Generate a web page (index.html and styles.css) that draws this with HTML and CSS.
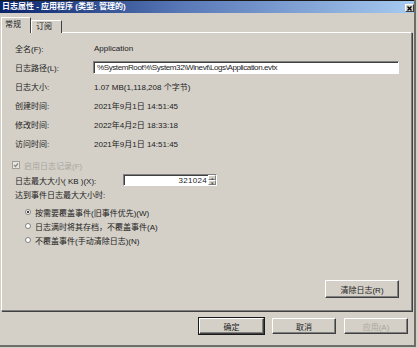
FILE: index.html
```html
<!DOCTYPE html>
<html lang="zh-CN">
<head>
    <meta charset="UTF-8">
    <meta name="viewport" content="width=device-width, initial-scale=1.0">
    <title>日志属性 - 应用程序</title>
    <link rel="stylesheet" href="styles.css">
</head>
<body>
    <div class="window">
        <div class="titlebar">
            <span class="title">日志属性 - 应用程序 (类型: 管理的)</span>
            <span class="close">
                <svg width="5" height="5" viewBox="0 0 5 5"><path d="M0.5 0.5 L4.5 4.5 M4.5 0.5 L0.5 4.5" stroke="#000" stroke-width="1.3"/></svg>
            </span>
        </div>

        <div class="tabs">
            <span class="tab active">常规</span>
            <span class="tab">订阅</span>
        </div>

        <div class="panel">
            <div class="props">
                <span class="label">全名(F):</span><span>Application</span>
                <span class="label">日志路径(L):</span><span class="textbox path">%SystemRoot%\System32\Winevt\Logs\Application.evtx</span>
                <span class="label">日志大小:</span><span>1.07 MB(1,118,208 个字节)</span>
                <span class="label">创建时间:</span><span>2021年9月1日 14:51:45</span>
                <span class="label">修改时间:</span><span>2022年4月2日 18:33:18</span>
                <span class="label">访问时间:</span><span>2021年9月1日 14:51:45</span>
            </div>

            <div class="row check disabled">
                <span class="box">
                    <svg width="6" height="6" viewBox="0 0 6 6"><path d="M1 3 L2.5 4.5 L5 1.5" stroke="#8a877f" stroke-width="1.2" fill="none"/></svg>
                </span>
                启用日志记录(F)
            </div>

            <div class="row size">
                <span class="size-label">日志最大大小( KB )(X):</span>
                <span class="textbox spin">
                    <span class="num">321024</span>
                    <span class="arrows">
                        <span class="arrow">&#9652;</span>
                        <span class="arrow">&#9662;</span>
                    </span>
                </span>
            </div>

            <div class="row reach">达到事件日志最大大小时:</div>

            <div class="row radio first"><span class="dot checked"></span>按需要覆盖事件(旧事件优先)(W)</div>
            <div class="row radio"><span class="dot"></span>日志满时将其存档，不覆盖事件(A)</div>
            <div class="row radio"><span class="dot"></span>不覆盖事件(手动清除日志)(N)</div>

            <div class="panel-foot">
                <button class="btn clear">清除日志(R)</button>
            </div>
        </div>

        <div class="buttons">
            <button class="btn default">确定</button>
            <button class="btn">取消</button>
            <button class="btn disabled">应用(A)</button>
        </div>
    </div>
</body>
</html>
```

FILE: styles.css
```css
body {
    margin: 0;
    padding: 0;
    background-color: #d4d0c8;
    font-family: "Liberation Sans", "Noto Sans CJK SC", sans-serif;
    font-size: 8px;
    color: #1c1c1c;
}
.window {
    width: 416px;
    height: 347px;
    box-sizing: border-box;
    background-color: #d4d0c8;
    border-right: 2px solid #6f6d68;
    border-bottom: 2px solid #6f6d68;
    display: flex;
    flex-direction: column;
}
.titlebar {
    height: 13px;
    border-top: 1px solid #1a1a1a;
    box-sizing: border-box;
    background: linear-gradient(to right, #0a246a, #5a7ab8 45%, #a6caf0);
    display: flex;
    align-items: flex-start;
    justify-content: space-between;
    padding: 0 0 0 2px;
}
.title {
    color: #fff;
    font-weight: bold;
    line-height: 11px;
}
.close {
    width: 9px;
    height: 8px;
    margin-top: 3px;
    background-color: #d4d0c8;
    border: 1px solid;
    border-color: #fff #404040 #404040 #fff;
    box-sizing: border-box;
    display: flex;
    align-items: center;
    justify-content: center;
}
.tabs {
    display: flex;
    align-items: flex-end;
    height: 15px;
    margin-top: 5px;
    margin-bottom: -1px;
    padding-left: 1px;
    position: relative;
    z-index: 1;
}
.tab {
    height: 12px;
    padding: 0 9px 0 4px;
    border: 1px solid;
    border-color: #fff #404040 transparent #fff;
    border-bottom: none;
    line-height: 12px;
    background-color: #d4d0c8;
}
.tab.active {
    height: 15px;
    line-height: 14px;
    padding: 0 9px 0 3px;
}
.panel {
    margin-left: 1px;
    width: 411px;
    height: 279px;
    box-sizing: border-box;
    border: 1px solid;
    border-color: #fff #808080 #808080 #fff;
    box-shadow: 1px 1px 0 #404040;
    padding: 6px 12px 0 13px;
    display: flex;
    flex-direction: column;
}
.props {
    display: grid;
    grid-template-columns: 79px 1fr;
    grid-auto-rows: 19px;
    align-items: center;
}
.textbox {
    background-color: #fff;
    border: 1px solid;
    border-color: #808080 #fff #fff #808080;
    box-shadow: inset 1px 1px 0 #404040;
    box-sizing: border-box;
}
.path {
    height: 13px;
    margin-left: -1px;
    padding-left: 3px;
    line-height: 11px;
    letter-spacing: -0.4px;
    white-space: nowrap;
    overflow: hidden;
}
.row {
    height: 14px;
    display: flex;
    align-items: center;
}
.check {
    margin-top: 5px;
    margin-left: -3px;
}
.disabled {
    color: #a8a59e;
}
.box {
    width: 6px;
    height: 6px;
    margin-right: 4px;
    border: 1px solid #a19e97;
    background-color: #e8e6e1;
    display: flex;
}
.size {
    margin-top: 1px;
}
.size-label {
    width: 108px;
}
.spin {
    width: 94px;
    height: 12px;
    display: flex;
    justify-content: flex-end;
    align-items: center;
}
.num {
    padding-right: 1px;
    letter-spacing: 0.3px;
}
.arrows {
    width: 8px;
    height: 10px;
    display: flex;
    flex-direction: column;
    background-color: #d4d0c8;
}
.arrow {
    height: 5px;
    font-size: 5px;
    line-height: 5px;
    text-align: center;
    color: #555;
    border: 1px solid;
    border-color: #fff #808080 #808080 #fff;
    box-sizing: border-box;
}
.radio {
    padding-left: 10px;
}
.radio.first {
    margin-top: 4px;
}
.dot {
    width: 6px;
    height: 6px;
    margin-right: 4px;
    border-radius: 50%;
    border: 1px solid #808080;
    background-color: #fff;
    box-sizing: border-box;
    display: flex;
    align-items: center;
    justify-content: center;
}
.dot.checked::after {
    content: "";
    width: 2px;
    height: 2px;
    border-radius: 50%;
    background-color: #000;
}
.panel-foot {
    margin-top: 33px;
    display: flex;
    justify-content: flex-end;
}
.btn {
    height: 16px;
    width: 64px;
    padding: 0;
    background-color: #d4d0c8;
    border: 1px solid;
    border-color: #fff #404040 #404040 #fff;
    box-shadow: inset -1px -1px 0 #808080;
    font-family: inherit;
    font-size: 8px;
    color: #1c1c1c;
}
.btn.clear {
    width: 74px;
    height: 18px;
}
.btn.default {
    width: 65px;
    outline: 1px solid #1a1a1a;
    outline-offset: 0;
}
.btn.disabled {
    color: #a8a59e;
}
.buttons {
    margin-top: 7px;
    padding-right: 6px;
    display: flex;
    justify-content: flex-end;
    gap: 8px;
}
```
